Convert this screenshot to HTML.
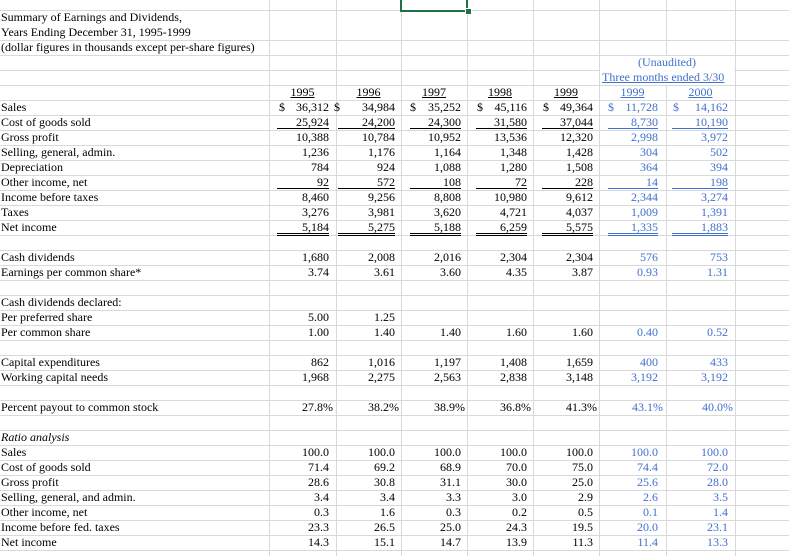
<!DOCTYPE html>
<html><head><meta charset="utf-8"><style>
html,body{margin:0;padding:0;background:#fff;}
body{width:789px;height:556px;position:relative;overflow:hidden;font-family:"Liberation Serif","Times New Roman",serif;font-size:12px;color:#000;}
.h{position:absolute;left:0;width:789px;height:1px;background:#d9d9d9;}
.v{position:absolute;top:0;width:1px;height:556px;background:#d9d9d9;}
.row{position:absolute;left:0;width:789px;height:15px;line-height:15px;white-space:nowrap;}
.row span{position:absolute;top:0;}
.l{left:1px;}
.c1{right:460px}.c2{right:394px}.c3{right:328px}.c4{right:262px}.c5{right:196px}.c6{right:131px}.c7{right:61px}
.p1{right:456px}.p2{right:390px}.p3{right:324px}.p4{right:258px}.p5{right:192px}.p6{right:126px}.p7{right:56px}
.d1{left:279px}.d2{left:334px}.d3{left:410px}.d4{left:477px}.d5{left:543px}.d6{left:608px}.d7{left:673px}
.b{color:#4170d0;}
.u{position:absolute;height:1px;background:#000;}
.ub{position:absolute;height:1px;background:#4170d0;}
.y{text-decoration:underline;text-underline-offset:1px;}
</style></head><body>
<div class="h" style="top:10px"></div>
<div style="position:absolute;left:0;top:40px;width:789px;height:516px;background:repeating-linear-gradient(to bottom,#d9d9d9 0 1px,transparent 1px 15px);"></div>
<div class="v" style="left:269px"></div>
<div class="v" style="left:336px"></div>
<div class="v" style="left:401px"></div>
<div class="v" style="left:467px"></div>
<div class="v" style="left:533px"></div>
<div class="v" style="left:599px"></div>
<div class="v" style="left:666px;height:55px"></div>
<div class="v" style="left:666px;top:85px;height:471px"></div>
<div class="v" style="left:735px"></div>
<div style="position:absolute;left:600px;top:56px;width:134px;height:29px;background:#fff"></div>

<div style="position:absolute;left:400px;top:-2px;width:64px;height:10px;border:2px solid #1e7145;"></div>
<div style="position:absolute;left:465px;top:8px;width:5px;height:5px;background:#1e7145;border:1px solid #fff;"></div>

<div class="row" style="top:10px"><span class="l">Summary of Earnings and Dividends,</span></div>
<div class="row" style="top:25px"><span class="l">Years Ending December 31, 1995-1999</span></div>
<div class="row" style="top:40px"><span class="l">(dollar figures in thousands except per-share figures)</span></div>
<div class="row" style="top:55px"><span class="b" style="left:599px;width:136px;text-align:center">(Unaudited)</span></div>
<div class="row" style="top:70px"><span class="b y" style="left:602px">Three months ended 3/30</span></div>
<div class="row" style="top:85px">
<span class="y" style="left:269px;width:67px;text-align:center">1995</span>
<span class="y" style="left:336px;width:65px;text-align:center">1996</span>
<span class="y" style="left:401px;width:66px;text-align:center">1997</span>
<span class="y" style="left:467px;width:66px;text-align:center">1998</span>
<span class="y" style="left:533px;width:66px;text-align:center">1999</span>
<span class="y b" style="left:599px;width:67px;text-align:center">1999</span>
<span class="y b" style="left:666px;width:69px;text-align:center">2000</span>
</div>
<div class="row" style="top:100px"><span class="l">Sales</span>
<span class="d1">$</span><span class="c1">36,312</span><span class="d2">$</span><span class="c2">34,984</span><span class="d3">$</span><span class="c3">35,252</span><span class="d4">$</span><span class="c4">45,116</span><span class="d5">$</span><span class="c5">49,364</span><span class="d6 b">$</span><span class="c6 b">11,728</span><span class="d7 b">$</span><span class="c7 b">14,162</span></div>
<div class="row" style="top:115px"><span class="l">Cost of goods sold</span>
<span class="c1">25,924</span><span class="c2">24,200</span><span class="c3">24,300</span><span class="c4">31,580</span><span class="c5">37,044</span><span class="c6 b">8,730</span><span class="c7 b">10,190</span></div>
<div class="row" style="top:130px"><span class="l">Gross profit</span>
<span class="c1">10,388</span><span class="c2">10,784</span><span class="c3">10,952</span><span class="c4">13,536</span><span class="c5">12,320</span><span class="c6 b">2,998</span><span class="c7 b">3,972</span></div>
<div class="row" style="top:145px"><span class="l">Selling, general, admin.</span>
<span class="c1">1,236</span><span class="c2">1,176</span><span class="c3">1,164</span><span class="c4">1,348</span><span class="c5">1,428</span><span class="c6 b">304</span><span class="c7 b">502</span></div>
<div class="row" style="top:160px"><span class="l">Depreciation</span>
<span class="c1">784</span><span class="c2">924</span><span class="c3">1,088</span><span class="c4">1,280</span><span class="c5">1,508</span><span class="c6 b">364</span><span class="c7 b">394</span></div>
<div class="row" style="top:175px"><span class="l">Other income, net</span>
<span class="c1">92</span><span class="c2">572</span><span class="c3">108</span><span class="c4">72</span><span class="c5">228</span><span class="c6 b">14</span><span class="c7 b">198</span></div>
<div class="row" style="top:190px"><span class="l">Income before taxes</span>
<span class="c1">8,460</span><span class="c2">9,256</span><span class="c3">8,808</span><span class="c4">10,980</span><span class="c5">9,612</span><span class="c6 b">2,344</span><span class="c7 b">3,274</span></div>
<div class="row" style="top:205px"><span class="l">Taxes</span>
<span class="c1">3,276</span><span class="c2">3,981</span><span class="c3">3,620</span><span class="c4">4,721</span><span class="c5">4,037</span><span class="c6 b">1,009</span><span class="c7 b">1,391</span></div>
<div class="row" style="top:220px"><span class="l">Net income</span>
<span class="c1">5,184</span><span class="c2">5,275</span><span class="c3">5,188</span><span class="c4">6,259</span><span class="c5">5,575</span><span class="c6 b">1,335</span><span class="c7 b">1,883</span></div>

<div class="u" style="top:128px;left:277px;width:52px"></div><div class="u" style="top:128px;left:338px;width:57px"></div><div class="u" style="top:128px;left:410px;width:51px"></div><div class="u" style="top:128px;left:476px;width:51px"></div><div class="u" style="top:128px;left:542px;width:51px"></div><div class="ub" style="top:128px;left:608px;width:50px"></div><div class="ub" style="top:128px;left:672px;width:56px"></div>
<div class="u" style="top:188px;left:277px;width:52px"></div><div class="u" style="top:188px;left:338px;width:57px"></div><div class="u" style="top:188px;left:410px;width:51px"></div><div class="u" style="top:188px;left:476px;width:51px"></div><div class="u" style="top:188px;left:542px;width:51px"></div><div class="ub" style="top:188px;left:608px;width:50px"></div><div class="ub" style="top:188px;left:672px;width:56px"></div>
<div class="u" style="top:233px;left:277px;width:52px"></div><div class="u" style="top:233px;left:338px;width:57px"></div><div class="u" style="top:233px;left:410px;width:51px"></div><div class="u" style="top:233px;left:476px;width:51px"></div><div class="u" style="top:233px;left:542px;width:51px"></div><div class="ub" style="top:233px;left:608px;width:50px"></div><div class="ub" style="top:233px;left:672px;width:56px"></div>
<div class="u" style="top:235px;left:277px;width:52px"></div><div class="u" style="top:235px;left:338px;width:57px"></div><div class="u" style="top:235px;left:410px;width:51px"></div><div class="u" style="top:235px;left:476px;width:51px"></div><div class="u" style="top:235px;left:542px;width:51px"></div><div class="ub" style="top:235px;left:608px;width:50px"></div><div class="ub" style="top:235px;left:672px;width:56px"></div>

<div class="row" style="top:250px"><span class="l">Cash dividends</span>
<span class="c1">1,680</span><span class="c2">2,008</span><span class="c3">2,016</span><span class="c4">2,304</span><span class="c5">2,304</span><span class="c6 b">576</span><span class="c7 b">753</span></div>
<div class="row" style="top:265px"><span class="l">Earnings per common share*</span>
<span class="c1">3.74</span><span class="c2">3.61</span><span class="c3">3.60</span><span class="c4">4.35</span><span class="c5">3.87</span><span class="c6 b">0.93</span><span class="c7 b">1.31</span></div>
<div class="row" style="top:295px"><span class="l">Cash dividends declared:</span></div>
<div class="row" style="top:310px"><span class="l">Per preferred share</span>
<span class="c1">5.00</span><span class="c2">1.25</span></div>
<div class="row" style="top:325px"><span class="l">Per common share</span>
<span class="c1">1.00</span><span class="c2">1.40</span><span class="c3">1.40</span><span class="c4">1.60</span><span class="c5">1.60</span><span class="c6 b">0.40</span><span class="c7 b">0.52</span></div>
<div class="row" style="top:355px"><span class="l">Capital expenditures</span>
<span class="c1">862</span><span class="c2">1,016</span><span class="c3">1,197</span><span class="c4">1,408</span><span class="c5">1,659</span><span class="c6 b">400</span><span class="c7 b">433</span></div>
<div class="row" style="top:370px"><span class="l">Working capital needs</span>
<span class="c1">1,968</span><span class="c2">2,275</span><span class="c3">2,563</span><span class="c4">2,838</span><span class="c5">3,148</span><span class="c6 b">3,192</span><span class="c7 b">3,192</span></div>
<div class="row" style="top:400px"><span class="l">Percent payout to common stock</span>
<span class="p1">27.8%</span><span class="p2">38.2%</span><span class="p3">38.9%</span><span class="p4">36.8%</span><span class="p5">41.3%</span><span class="p6 b">43.1%</span><span class="p7 b">40.0%</span></div>
<div class="row" style="top:430px"><span class="l" style="font-style:italic">Ratio analysis</span></div>
<div class="row" style="top:445px"><span class="l">Sales</span>
<span class="c1">100.0</span><span class="c2">100.0</span><span class="c3">100.0</span><span class="c4">100.0</span><span class="c5">100.0</span><span class="c6 b">100.0</span><span class="c7 b">100.0</span></div>
<div class="row" style="top:460px"><span class="l">Cost of goods sold</span>
<span class="c1">71.4</span><span class="c2">69.2</span><span class="c3">68.9</span><span class="c4">70.0</span><span class="c5">75.0</span><span class="c6 b">74.4</span><span class="c7 b">72.0</span></div>
<div class="row" style="top:475px"><span class="l">Gross profit</span>
<span class="c1">28.6</span><span class="c2">30.8</span><span class="c3">31.1</span><span class="c4">30.0</span><span class="c5">25.0</span><span class="c6 b">25.6</span><span class="c7 b">28.0</span></div>
<div class="row" style="top:490px"><span class="l">Selling, general, and admin.</span>
<span class="c1">3.4</span><span class="c2">3.4</span><span class="c3">3.3</span><span class="c4">3.0</span><span class="c5">2.9</span><span class="c6 b">2.6</span><span class="c7 b">3.5</span></div>
<div class="row" style="top:505px"><span class="l">Other income, net</span>
<span class="c1">0.3</span><span class="c2">1.6</span><span class="c3">0.3</span><span class="c4">0.2</span><span class="c5">0.5</span><span class="c6 b">0.1</span><span class="c7 b">1.4</span></div>
<div class="row" style="top:520px"><span class="l">Income before fed. taxes</span>
<span class="c1">23.3</span><span class="c2">26.5</span><span class="c3">25.0</span><span class="c4">24.3</span><span class="c5">19.5</span><span class="c6 b">20.0</span><span class="c7 b">23.1</span></div>
<div class="row" style="top:535px"><span class="l">Net income</span>
<span class="c1">14.3</span><span class="c2">15.1</span><span class="c3">14.7</span><span class="c4">13.9</span><span class="c5">11.3</span><span class="c6 b">11.4</span><span class="c7 b">13.3</span></div>
</body></html>
